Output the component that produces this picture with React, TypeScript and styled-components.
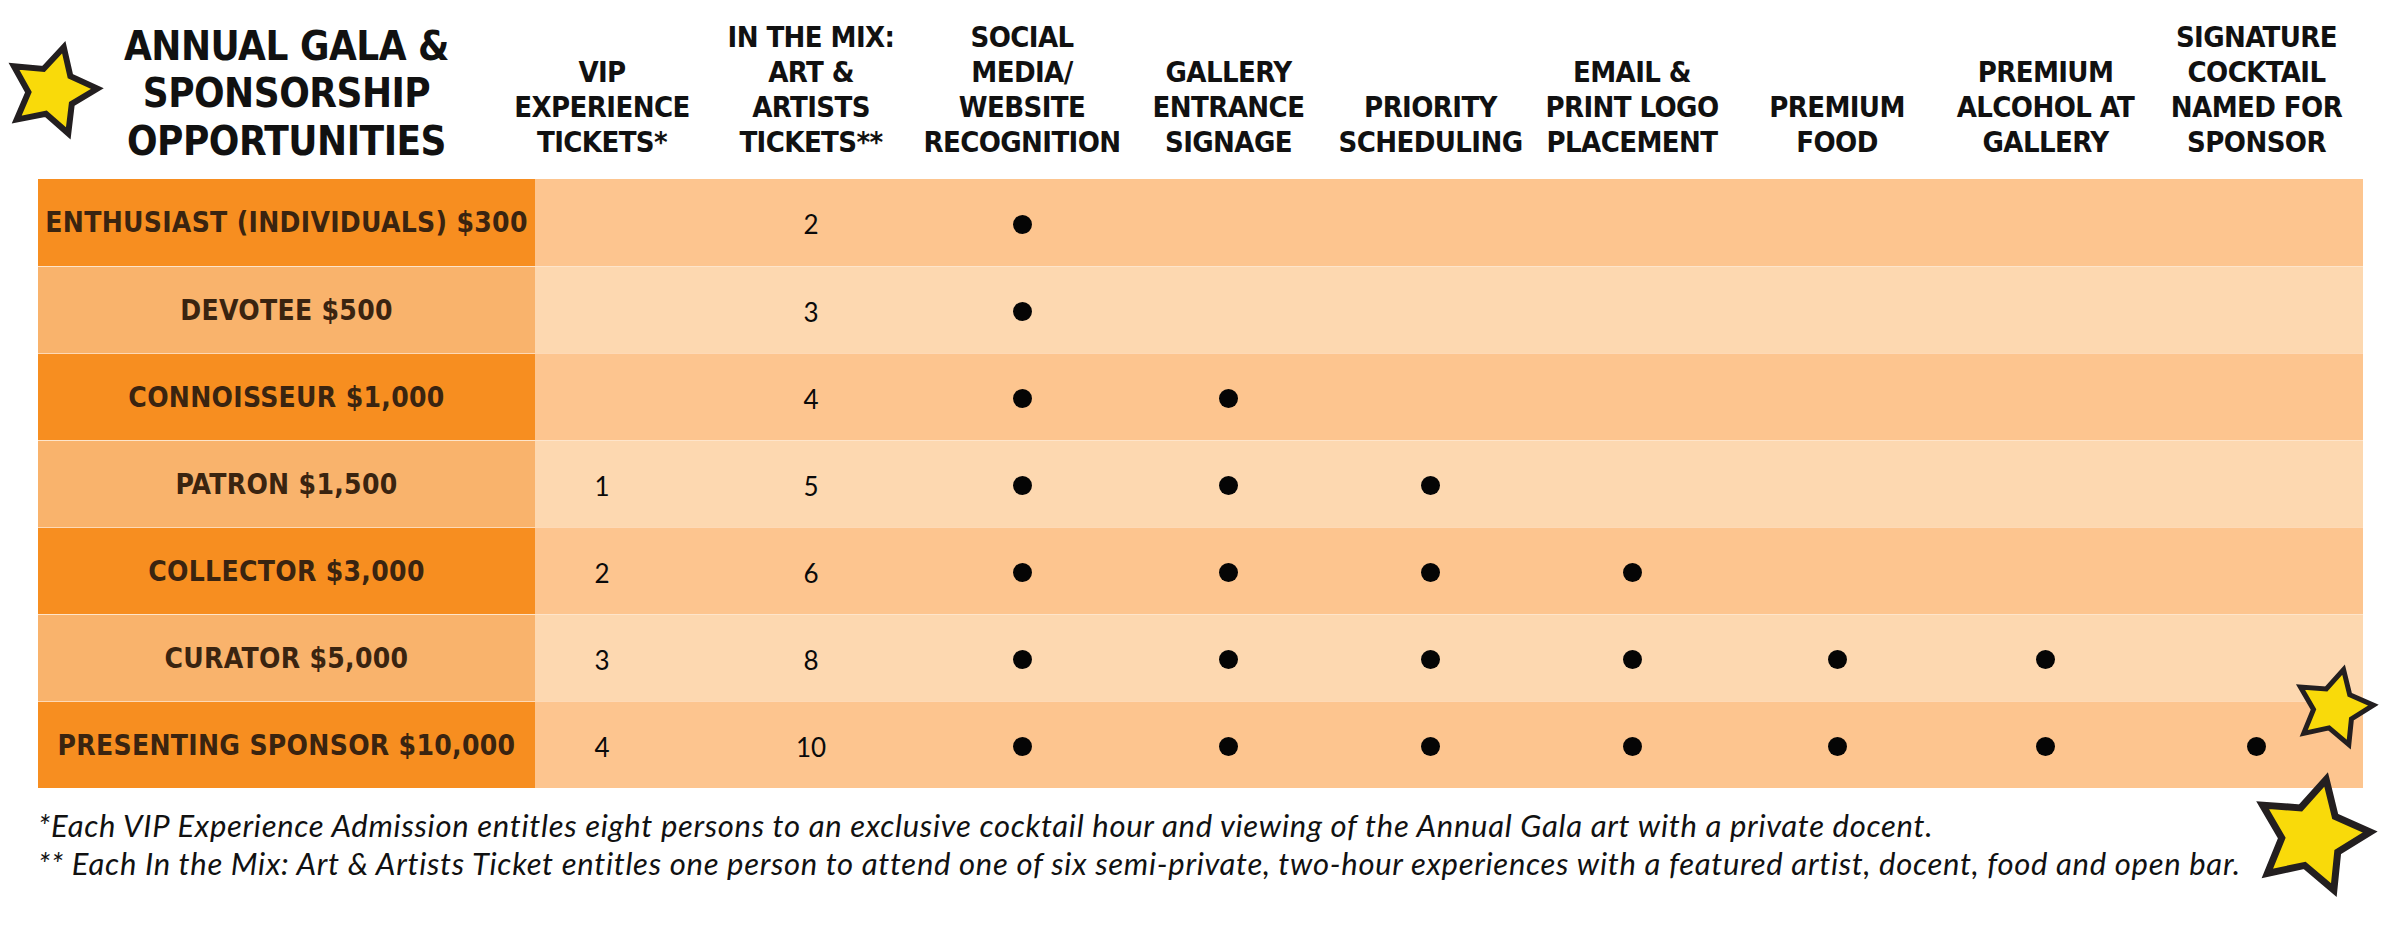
import React from 'react';
import styled, { createGlobalStyle } from 'styled-components';

const GlobalStyle = createGlobalStyle`
  html, body {
    margin: 0;
    padding: 0;
    background: #ffffff;
  }
`;

const comic = `"DejaVu Sans", sans-serif`;
const columns = '497px 170px 212px 210px 203px 201px 202px 208px 209px 213px';

const Page = styled.div`
  position: relative;
  width: 2400px;
  height: 927px;
  overflow: hidden;
  background: #ffffff;
`;

const Sheet = styled.div`
  margin-left: 38px;
  width: 2325px;
  display: flex;
  flex-direction: column;
`;

const HeaderRow = styled.div`
  display: grid;
  grid-template-columns: ${columns};
  height: 179px;
  align-items: end;
`;

const TitleCell = styled.div`
  display: flex;
  flex-direction: column;
  align-items: center;
  padding-bottom: 14px;
  font-family: ${comic};
  font-stretch: condensed;
  font-weight: 700;
  font-size: 40px;
  line-height: 47.5px;
  letter-spacing: -0.5px;
  color: #111111;
  white-space: nowrap;
`;

const ColumnHead = styled.div<{ $shift?: number }>`
  display: flex;
  flex-direction: column;
  align-items: center;
  padding-bottom: 19px;
  padding-right: ${p => p.$shift ?? 0}px;
  font-family: ${comic};
  font-stretch: condensed;
  font-weight: 700;
  font-size: 29px;
  line-height: 35px;
  letter-spacing: -0.6px;
  color: #111111;
  white-space: nowrap;
`;

const TierRow = styled.div<{ $odd: boolean }>`
  display: grid;
  grid-template-columns: ${columns};
  height: 87px;
  box-sizing: border-box;
  background: ${p => (p.$odd ? '#fdc58f' : '#fdd8b0')};

  & + & {
    border-top: 1px solid rgba(255, 255, 255, 0.35);
  }
`;

const TierLabel = styled.div<{ $odd: boolean }>`
  display: flex;
  align-items: center;
  justify-content: center;
  background: ${p => (p.$odd ? '#f78e20' : '#f9b36c')};
  font-family: ${comic};
  font-stretch: condensed;
  font-weight: 700;
  font-size: 28px;
  letter-spacing: 0.3px;
  color: #3a2410;
  white-space: nowrap;
`;

const DataCell = styled.div<{ $shift?: number }>`
  display: flex;
  align-items: center;
  justify-content: center;
  padding: 3px ${p => p.$shift ?? 0}px 0 0;
`;

const Count = styled.span`
  font-family: "Lato", "DejaVu Sans", sans-serif;
  font-size: 26px;
  color: #0a0a0a;
`;

const Dot = styled.span`
  width: 19px;
  height: 19px;
  border-radius: 50%;
  background: #050505;
`;

const Notes = styled.div`
  margin: 19px 0 0 38px;
  font-family: "Lato", "DejaVu Sans", sans-serif;
  font-style: italic;
  font-weight: 400;
  font-size: 31px;
  line-height: 37.5px;
  letter-spacing: 0.7px;
  color: #111111;
  white-space: nowrap;
`;

const Note = styled.div``;

const StarMark = styled.svg<{ $x: number; $y: number; $size: number }>`
  position: absolute;
  left: ${p => p.$x - p.$size / 2}px;
  top: ${p => p.$y - p.$size / 2}px;
  width: ${p => p.$size}px;
  height: ${p => p.$size}px;
  overflow: visible;
`;

function starPoints(R: number, r: number, rot: number) {
  const pts: string[] = [];
  for (let i = 0; i < 10; i++) {
    const rad = i % 2 === 0 ? R : r;
    const a = ((rot + i * 36) * Math.PI) / 180;
    pts.push(`${(rad * Math.sin(a)).toFixed(2)},${(-rad * Math.cos(a)).toFixed(2)}`);
  }
  return pts.join(' ');
}

const Star = ({ x, y, outer, stroke, rot }: { x: number; y: number; outer: number; stroke: number; rot: number }) => {
  const R = outer - stroke * 1.1;
  return (
    <StarMark $x={x} $y={y} $size={outer * 2} viewBox={`${-outer} ${-outer} ${outer * 2} ${outer * 2}`}>
      <polygon
        points={starPoints(R, R * 0.52, rot)}
        fill="#f9da0a"
        stroke="#231f20"
        strokeWidth={stroke}
        strokeLinejoin="miter"
        strokeMiterlimit={10}
      />
    </StarMark>
  );
};

const heads: string[][] = [
  ['VIP', 'EXPERIENCE', 'TICKETS*'],
  ['IN THE MIX:', 'ART &', 'ARTISTS', 'TICKETS**'],
  ['SOCIAL', 'MEDIA/', 'WEBSITE', 'RECOGNITION'],
  ['GALLERY', 'ENTRANCE', 'SIGNAGE'],
  ['PRIORITY', 'SCHEDULING'],
  ['EMAIL &', 'PRINT LOGO', 'PLACEMENT'],
  ['PREMIUM', 'FOOD'],
  ['PREMIUM', 'ALCOHOL AT', 'GALLERY'],
  ['SIGNATURE', 'COCKTAIL', 'NAMED FOR', 'SPONSOR'],
];

const tiers = [
  { label: 'ENTHUSIAST (INDIVIDUALS) $300', vip: '', mix: '2', perks: 1 },
  { label: 'DEVOTEE $500', vip: '', mix: '3', perks: 1 },
  { label: 'CONNOISSEUR $1,000', vip: '', mix: '4', perks: 2 },
  { label: 'PATRON $1,500', vip: '1', mix: '5', perks: 3 },
  { label: 'COLLECTOR $3,000', vip: '2', mix: '6', perks: 4 },
  { label: 'CURATOR $5,000', vip: '3', mix: '8', perks: 6 },
  { label: 'PRESENTING SPONSOR $10,000', vip: '4', mix: '10', perks: 7 },
];

export default function App() {
  return (
    <Page>
      <GlobalStyle />
      <Sheet>
        <HeaderRow>
          <TitleCell>
            <span>ANNUAL GALA &amp;</span>
            <span>SPONSORSHIP</span>
            <span>OPPORTUNITIES</span>
          </TitleCell>
          {heads.map((lines, i) => (
            <ColumnHead key={i} $shift={i === 0 ? 36 : 0}>
              {lines.map(l => (
                <span key={l}>{l}</span>
              ))}
            </ColumnHead>
          ))}
        </HeaderRow>
        {tiers.map((t, i) => {
          const odd = i % 2 === 0;
          return (
            <TierRow key={t.label} $odd={odd}>
              <TierLabel $odd={odd}>{t.label}</TierLabel>
              <DataCell $shift={36}>{t.vip && <Count>{t.vip}</Count>}</DataCell>
              <DataCell>
                <Count>{t.mix}</Count>
              </DataCell>
              {Array.from({ length: 7 }, (_, k) => (
                <DataCell key={k}>{k < t.perks && <Dot />}</DataCell>
              ))}
            </TierRow>
          );
        })}
      </Sheet>
      <Notes>
        <Note>
          *Each VIP Experience Admission entitles eight persons to an exclusive cocktail hour and viewing of the Annual
          Gala art with a private docent.
        </Note>
        <Note>
          ** Each In the Mix: Art &amp; Artists Ticket entitles one person to attend one of six semi-private, two-hour
          experiences with a featured artist, docent, food and open bar.
        </Note>
      </Notes>
      <Star x={52} y={91} outer={52} stroke={6} rot={15} />
      <Star x={2334} y={708} outer={45} stroke={5} rot={14} />
      <Star x={2312} y={836} outer={66} stroke={7} rot={14} />
    </Page>
  );
}
